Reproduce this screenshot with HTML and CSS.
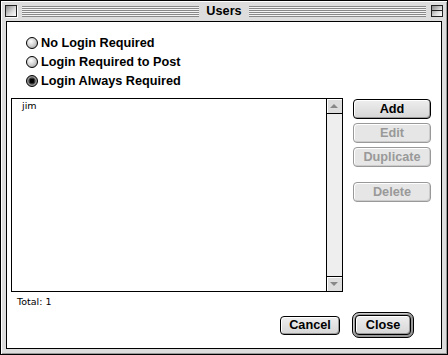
FILE: index.html
```html
<!DOCTYPE html>
<html lang="en">
<head>
    <meta charset="UTF-8">
    <title>Users</title>
    <link rel="stylesheet" href="styles.css">
</head>
<body>
    <div class="window">
        <div class="titlebar">
            <span class="closebox"></span>
            <span class="stripes"></span>
            <span class="title">Users</span>
            <span class="stripes"></span>
            <span class="shadebox"></span>
        </div>

        <div class="content">
            <div class="radios">
                <div class="radio"><span class="dot"></span>No Login Required</div>
                <div class="radio"><span class="dot"></span>Login Required to Post</div>
                <div class="radio checked"><span class="dot"></span>Login Always Required</div>
            </div>

            <div class="main">
                <div class="list">
                    <div class="items">
                        <div class="item">jim</div>
                    </div>
                    <div class="scrollbar">
                        <div class="arrow up"></div>
                        <div class="track"></div>
                        <div class="arrow down"></div>
                    </div>
                </div>
                <div class="sideButtons">
                    <button class="btn">Add</button>
                    <button class="btn disabled">Edit</button>
                    <button class="btn disabled">Duplicate</button>
                    <button class="btn disabled spaced">Delete</button>
                </div>
            </div>

            <div class="total">Total: 1</div>

            <div class="footer">
                <button class="btn cancel">Cancel</button>
                <div class="defaultRing">
                    <button class="btn close">Close</button>
                </div>
            </div>
        </div>
    </div>
</body>
</html>
```

FILE: styles.css
```css
body {
    margin: 0;
    padding: 0;
    background-color: #fff;
    font-family: 'Liberation Sans', Arial, sans-serif;
}

.window {
    width: 448px;
    height: 355px;
    box-sizing: border-box;
    border: 1px solid #000;
    background-color: #dddddd;
    box-shadow: inset 1px 1px #fff, inset -1px -1px #999;
    display: flex;
    flex-direction: column;
}

/* title bar */
.titlebar {
    height: 20px;
    display: flex;
    align-items: center;
    padding: 0 4px;
    gap: 5px;
}

.closebox {
    width: 12px;
    height: 12px;
    box-sizing: border-box;
    border: 1px solid #222;
    background: linear-gradient(135deg, #888, #ddd 60%, #fff);
    box-shadow: 1px 1px #fff;
}

.stripes {
    flex: 1;
    height: 11px;
    background: repeating-linear-gradient(to bottom, #888 0 1px, #f4f4f4 1px 2px);
}

.title {
    font-weight: bold;
    font-size: 12.7px;
    padding: 0 2px;
}

.shadebox {
    width: 12px;
    height: 12px;
    box-sizing: border-box;
    border: 1px solid #222;
    background: linear-gradient(135deg, #888, #ddd 60%, #fff);
    position: relative;
}

.shadebox::after {
    content: "";
    position: absolute;
    left: 0;
    right: 0;
    top: 4px;
    border-top: 1px solid #222;
}

/* white dialog area */
.content {
    flex: 1;
    margin: 0 5px 5px 5px;
    border: 1px solid #000;
    background-color: #fff;
    padding: 11px 0 0 4px;
    display: flex;
    flex-direction: column;
}

.radios {
    margin-left: 15px;
}

.radio {
    height: 19px;
    display: flex;
    align-items: center;
    font-weight: bold;
    font-size: 12.7px;
}

.dot {
    width: 12px;
    height: 12px;
    box-sizing: border-box;
    border: 1px solid #000;
    border-radius: 50%;
    margin-right: 3px;
    background: radial-gradient(circle at 40% 35%, #fff, #ccc 55%, #888);
}

.checked .dot {
    background: radial-gradient(circle, #000 0 2px, #333 2.5px 3px, #999 4px, #666);
}

.main {
    display: flex;
    margin-top: 8px;
}

.list {
    width: 332px;
    height: 194px;
    box-sizing: border-box;
    border: 1px solid #000;
    display: flex;
}

.items {
    flex: 1;
    padding-top: 1px;
}

.item {
    font-family: 'DejaVu Sans', Verdana, sans-serif;
    font-size: 9.5px;
    line-height: 12px;
    padding-left: 10px;
}

.scrollbar {
    width: 15px;
    border-left: 1px solid #000;
    display: flex;
    flex-direction: column;
    background-color: #eeeeee;
}

.track {
    flex: 1;
}

.arrow {
    height: 14px;
    background-color: #dddddd;
    box-shadow: inset 1px 1px #fff;
    position: relative;
}

.arrow.up {
    border-bottom: 1px solid #000;
}

.arrow.down {
    border-top: 1px solid #000;
}

.arrow::after {
    content: "";
    position: absolute;
    left: 3px;
    top: 5px;
    border-left: 4px solid transparent;
    border-right: 4px solid transparent;
}

.arrow.up::after {
    border-bottom: 4px solid #888;
}

.arrow.down::after {
    border-top: 4px solid #888;
}

/* buttons */
.btn {
    font-family: 'Liberation Sans', Arial, sans-serif;
    font-weight: bold;
    font-size: 12.7px;
    color: #000;
    background: linear-gradient(#eeeeee, #d6d6d6);
    border: 1px solid #000;
    border-radius: 4px;
    box-shadow: inset 1px 1px #fff, inset -1px -1px #999;
    padding: 0;
    height: 20px;
}

.btn.disabled {
    color: #999;
    border-color: #999;
    background: #e6e6e6;
    box-shadow: inset 1px 1px #fff, inset -1px -1px #ccc;
}

.sideButtons {
    margin-left: 10px;
    margin-top: 1px;
    display: flex;
    flex-direction: column;
    gap: 4px;
}

.sideButtons .btn {
    width: 78px;
}

.sideButtons .spaced {
    margin-top: 11px;
}

.total {
    font-family: 'DejaVu Sans', Verdana, sans-serif;
    font-size: 9.5px;
    line-height: 12px;
    margin-top: 4px;
    padding-left: 6px;
}

.footer {
    margin-top: auto;
    display: flex;
    justify-content: flex-end;
    align-items: center;
    gap: 12px;
    padding: 0 27px 10px 0;
}

.cancel {
    width: 60px;
    height: 19px;
}

.defaultRing {
    box-sizing: border-box;
    width: 62px;
    height: 26px;
    padding: 2px;
    border: 1px solid #000;
    border-radius: 7px;
    background-color: #999;
    box-shadow: inset 1px 1px #ccc;
}

.close {
    width: 56px;
    height: 20px;
    display: block;
}
```
